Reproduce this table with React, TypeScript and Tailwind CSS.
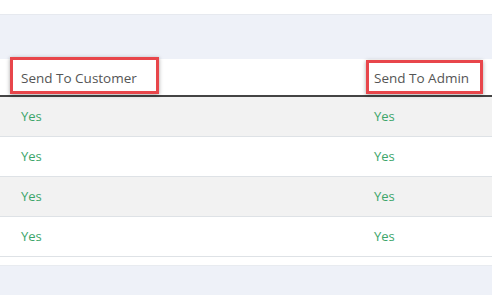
import React from "react";

const rows = [
  { customer: "Yes", admin: "Yes" },
  { customer: "Yes", admin: "Yes" },
  { customer: "Yes", admin: "Yes" },
  { customer: "Yes", admin: "Yes" },
];

function Marked({ children, className }: { children: React.ReactNode; className: string }) {
  return (
    <div className="relative">
      {children}
      <div
        className={`pointer-events-none absolute border-[3px] border-[#e8464b] shadow-[0_1px_4px_rgba(0,0,0,0.35)] ${className}`}
      />
    </div>
  );
}

export default function App() {
  return (
    <div
      className="w-[492px] h-[295px] overflow-hidden bg-white flex flex-col"
      style={{ fontFamily: "'Open Sans', Lato, sans-serif" }}
    >
      <div className="h-[15px] bg-white border-b border-[#e6e9ef] shrink-0" />
      <div className="h-[44px] bg-[#eef1f8] shrink-0" />
      <div className="bg-white shrink-0">
        <div className="grid grid-cols-[353px_1fr] h-[38px] border-b-2 border-[#444] text-[13.5px] text-[#555]">
          <Marked className="left-[10px] top-[-2px] w-[149px] h-[37px]">
            <div className="pl-[21px] pt-[11px] leading-[16px]">Send To Customer</div>
          </Marked>
          <Marked className="left-[13px] top-[1px] w-[117px] h-[34px]">
            <div className="pl-[21px] pt-[11px] leading-[16px]">Send To Admin</div>
          </Marked>
        </div>
        {rows.map((r, i) => (
          <div
            key={i}
            className={`grid grid-cols-[353px_1fr] h-[40px] border-b border-[#dee2e6] text-[13px] text-[#3da56a] ${
              i % 2 === 0 ? "bg-[#f2f2f2]" : "bg-white"
            }`}
          >
            <div className="pl-[21px] pt-[9px] leading-[20px]">{r.customer}</div>
            <div className="pl-[21px] pt-[9px] leading-[20px]">{r.admin}</div>
          </div>
        ))}
        <div className="h-[9px] bg-white border-b border-[#e8ebf0]" />
      </div>
      <div className="flex-1 bg-[#eef1f8]" />
    </div>
  );
}
